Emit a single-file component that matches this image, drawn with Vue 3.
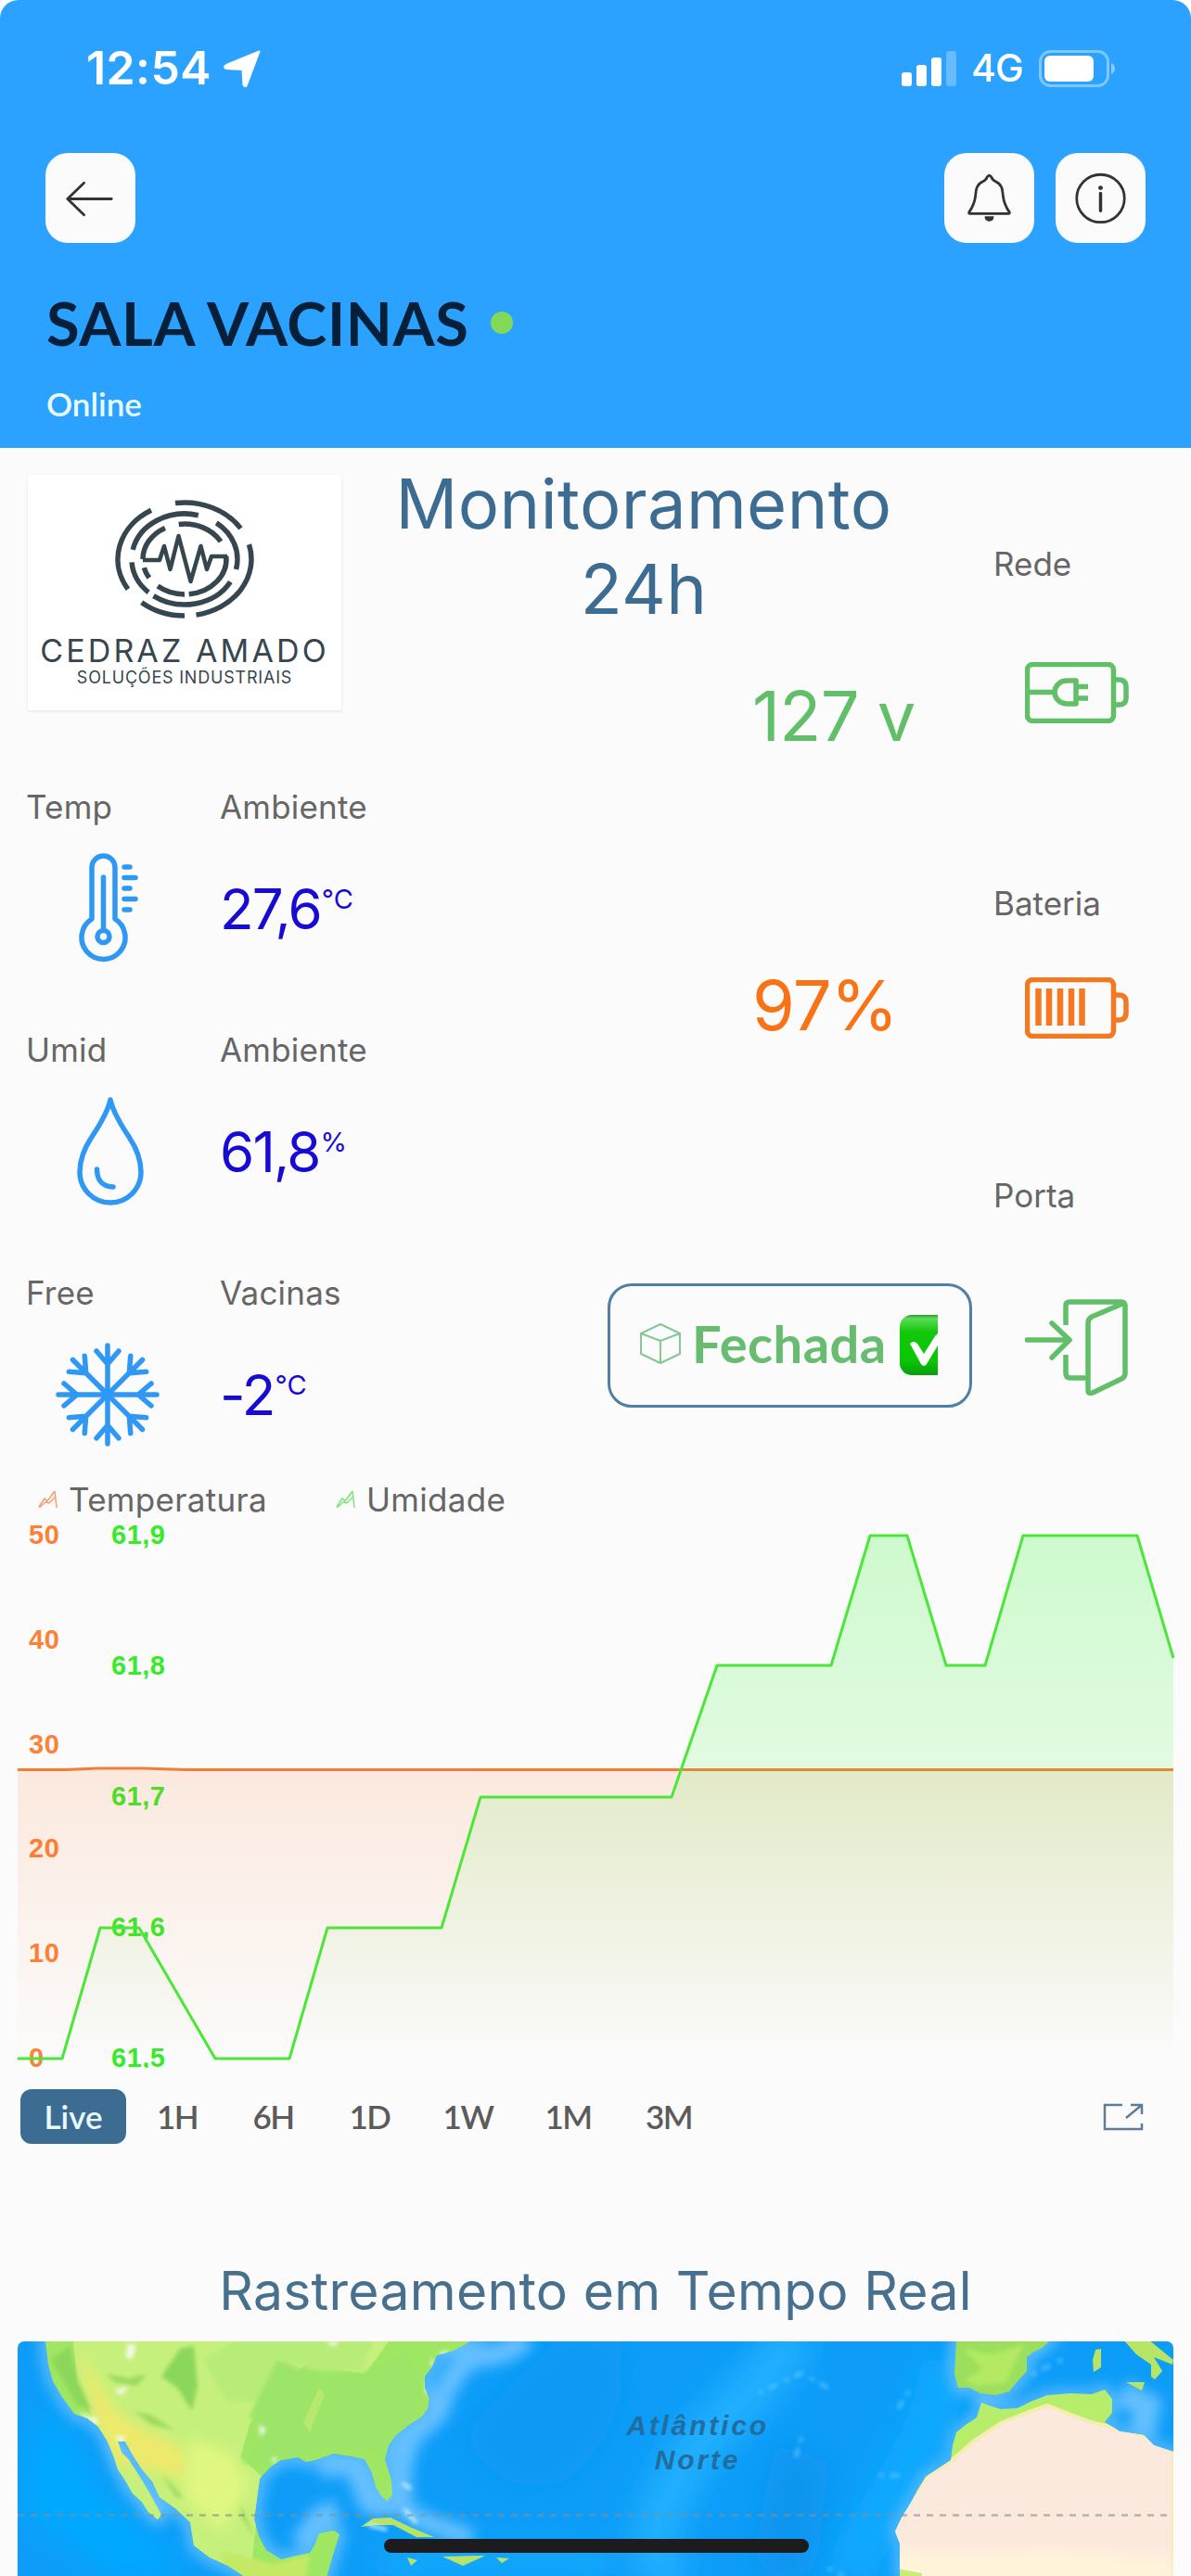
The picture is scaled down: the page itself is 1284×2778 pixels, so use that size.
<template>
  <div class="screen">
    <header class="top">
      <div class="status-bar">
        <span class="clock">12:54</span>
        <svg class="location" viewBox="0 0 40 40"><path d="M38.5 1.5 L25 37.5 Q23.5 41 21.5 37.5 L20.500 21 L3 20 Q-1 18.500 3 16 Z" fill="#fff" stroke="#fff" stroke-width="2" stroke-linejoin="round" /></svg>
        <svg class="signal" viewBox="0 0 60 38">
          <rect x="0" y="23" width="11" height="15" rx="3" />
          <rect x="16" y="15" width="11" height="23" rx="3" />
          <rect x="32" y="7" width="11" height="31" rx="3" />
          <rect x="48" y="0" width="11" height="38" rx="3" opacity=".28" />
        </svg>
        <span class="network">4G</span>
        <svg class="phone-battery" viewBox="0 0 84 40">
          <rect x="1.500" y="1.500" width="73" height="37" rx="11" fill="none" stroke="#fff" stroke-opacity=".4" stroke-width="3" />
          <rect x="6" y="6" width="53" height="28" rx="6" fill="#fff" />
          <path d="M78 14 Q82 16 82 20 Q82 24 78 26 Z" fill="#fff" opacity=".45" />
        </svg>
      </div>

      <div class="toolbar">
        <button type="button">
          <svg viewBox="0 0 98 98"><path d="M72 50 H24 M42 32.500 L24 50 L42 67.500" /></svg>
        </button>
        <button type="button" class="push-right">
          <svg viewBox="0 0 98 98">
            <path d="M27 64.500 C31 59 33 54 34 47 C34.500 39 35.500 34 42 31 C45.500 29.500 46 28 46.500 26.500 Q49 22.500 51.500 26.500 C52 28 52.500 29.500 56 31 C62.500 34 63.500 39 64 47 C65 54 67 59 71 64.500 Q71.500 66 70 66 H28 Q26.500 66 27 64.500 Z" />
            <path d="M44 69 H54 Q54 74.500 49 74.500 Q44 74.500 44 69 Z" fill="#333" stroke="none" />
          </svg>
        </button>
        <button type="button">
          <svg viewBox="0 0 98 98">
            <circle cx="49" cy="49.500" r="26" />
            <path d="M49 44 V63" stroke-width="3.500" />
            <circle cx="49" cy="38" r="2.500" fill="#333" stroke="none" />
          </svg>
        </button>
      </div>

      <div class="device-name">
        <h1>SALA VACINAS</h1>
        <i class="online-dot"></i>
      </div>
      <p class="device-status">Online</p>
    </header>

    <main>
      <section class="dashboard">
        <div class="left-column">
          <div class="brand">
            <svg viewBox="0 0 150 128" fill="none" stroke="#36464f" stroke-width="5.500">
              <path v-for="(arc, index) in logoArcs" :key="index" :d="arc" />
              <path d="M30 65 H48 L53 50 L59.500 75 L68.500 39 L81.500 88 L92.500 50 L99 75 L104 61 H121" stroke-width="4.500" stroke-linejoin="round" />
            </svg>
            <strong>CEDRAZ AMADO</strong>
            <span>SOLUÇÕES INDUSTRIAIS</span>
          </div>

          <article v-for="sensor in sensors" :key="sensor.icon" class="sensor">
            <div class="sensor-labels">
              <span>{{ sensor.label }}</span>
              <span>{{ sensor.place }}</span>
            </div>
            <div class="sensor-body">
              <svg v-if="sensor.icon === 'thermometer'" viewBox="0 0 208 120">
                <path d="M70 71 V15.500 A12.500 12.500 0 0 1 95 15.500 V71 A23.500 23.500 0 1 1 70 71 Z" />
                <path d="M82.500 26 V82" />
                <circle cx="82.500" cy="90" r="6.500" />
                <path d="M105 15 H111 M105 26.500 H117 M105 38 H111 M105 49.500 H117 M105 61 H111" />
              </svg>
              <svg v-else-if="sensor.icon === 'drop'" viewBox="0 0 208 120">
                <path d="M90 4 C93 18 102 32 110 44 C118 56 123 69 123 82 A33 33 0 0 1 57 82 C57 69 62 56 70 44 C78 32 87 18 90 4 Z" />
                <path d="M75.500 79 C75.500 91 82 98 93 98" />
              </svg>
              <svg v-else viewBox="0 0 208 120">
                <g v-for="angle in flakeAngles" :key="angle" :transform="`rotate(${angle} 87 60)`">
                  <path d="M87 60 V7 M75 13 L87 27 L99 13" />
                </g>
              </svg>
              <div class="sensor-value">
                <b>{{ sensor.value }}</b><sup>{{ sensor.unit }}</sup>
              </div>
            </div>
          </article>
        </div>

        <div class="middle-column">
          <h2>Monitoramento 24h</h2>
          <div class="reading mains">127 v</div>
          <div class="reading battery">97%</div>
          <button type="button" class="door-state">
            <svg class="cube" viewBox="0 0 46 46"><path d="M23 2 L44 12 V34 L23 44 L2 34 V12 Z M2 12 L23 20 L44 12 M23 20 V44" /></svg>
            <span>Fechada</span>
            <svg class="check" viewBox="0 0 41 65">
              <defs>
                <linearGradient id="checkFill" x1="0" y1="0" x2="0" y2="1">
                  <stop offset="0" stop-color="#2a9a30" />
                  <stop offset=".06" stop-color="#5ddc58" />
                  <stop offset=".28" stop-color="#12c70b" />
                  <stop offset=".75" stop-color="#0ac704" />
                  <stop offset="1" stop-color="#0a9d13" />
                </linearGradient>
              </defs>
              <rect width="66" height="65" rx="13" fill="url(#checkFill)" />
              <path d="M11 31 Q15 27 19 31 L26 42 L38 23 L41 20 V33 L29 53 Q26 57 23 53 Z" fill="#fff" />
            </svg>
          </button>
        </div>

        <div class="right-column">
          <p class="label-mains">Rede</p>
          <svg class="mains-icon" viewBox="0 0 112 66">
            <rect x="2.500" y="2.500" width="93" height="61" rx="6" />
            <path d="M97 19 H101 Q109 19 109 27 V39 Q109 46 101 46 H97" />
            <path d="M2 32.500 H30" />
            <path d="M55 20 H45 A13 12.500 0 0 0 45 45 H55 Z M56 26.500 H68 M56 39 H68" />
          </svg>
          <p class="label-battery">Bateria</p>
          <svg class="battery-icon" viewBox="0 0 112 66">
            <rect x="2.500" y="2.500" width="93" height="61" rx="6" />
            <path d="M97 19 H101 Q109 19 109 27 V38 Q109 46 101 46 H97" />
            <path d="M14.500 12 V52 M26 12 V52 M38 12 V52 M50 12 V52 M61.500 12 V52" stroke-width="6.500" />
          </svg>
          <p class="label-door">Porta</p>
          <svg class="door-icon" viewBox="0 0 112 106">
            <path d="M44 28 V7 Q44 3 48 3 H104 Q108 3 108 8 V80 Q108 84 104 86 L73 101 Q68 103 68 98 V26 Q68 21 72 19 L105 5" />
            <path d="M44 60 V80 Q44 85 49 85 H67" />
            <path d="M2 44 H47 M29 26 L48 44 L29 63" stroke-linecap="round" stroke-linejoin="round" />
          </svg>
        </div>
      </section>

      <div class="legend">
        <span v-for="item in legend" :key="item.name">
          <svg viewBox="0 0 22 22" :stroke="item.color"><path d="M1 19 L7 10 L10 13 L18 2 M1 20 L8 14 L12 15 L19 8 M18 2 L20 20" /></svg>
          {{ item.name }}
        </span>
      </div>

      <svg class="chart" viewBox="0 1637 1284 593">
        <defs>
          <linearGradient id="tempFill" gradientUnits="userSpaceOnUse" x1="0" y1="1908" x2="0" y2="2220">
            <stop offset="0" stop-color="#ff6d1a" stop-opacity=".13" />
            <stop offset="1" stop-color="#ff6d1a" stop-opacity="0" />
          </linearGradient>
          <linearGradient id="humidFill" gradientUnits="userSpaceOnUse" x1="0" y1="1656" x2="0" y2="2220">
            <stop offset="0" stop-color="#2df52d" stop-opacity=".22" />
            <stop offset="1" stop-color="#2df52d" stop-opacity="0" />
          </linearGradient>
        </defs>
        <g class="axis temp-axis">
          <text v-for="tick in tempTicks" :key="tick.text" x="31" :y="tick.y">{{ tick.text }}</text>
        </g>
        <g class="axis humid-axis">
          <text v-for="tick in humidTicks" :key="tick.text" x="120" :y="tick.y">{{ tick.text }}</text>
        </g>
        <path :d="`${tempLine} V2220 H19 Z`" fill="url(#tempFill)" />
        <path :d="tempLine" class="temp-line" />
        <path :d="`${humidLine} V2220 H19 Z`" fill="url(#humidFill)" />
        <path :d="humidLine" class="humid-line" />
      </svg>

      <nav class="ranges">
        <button
          v-for="range in ranges"
          :key="range.name"
          type="button"
          :class="{ active: range.name === activeRange }"
          :style="{ width: range.width + 'px' }"
          @click="activeRange = range.name"
        >{{ range.name }}</button>
        <svg class="expand" viewBox="0 0 44 30"><path d="M21 2 H2 V28 H42 V22 M25 16 L42 2 M30 2 H42 V12" /></svg>
      </nav>

      <h3>Rastreamento em Tempo Real</h3>

      <div class="map">
        <svg viewBox="0 0 1246 253">
          <defs>
            <filter id="soft" x="-20%" y="-20%" width="140%" height="140%"><feGaussianBlur stdDeviation="7" /></filter>
            <filter id="softer" x="-30%" y="-30%" width="160%" height="160%"><feGaussianBlur stdDeviation="16" /></filter>
            <filter id="edge"><feGaussianBlur stdDeviation="2" /></filter>
            <clipPath id="america"><path :d="america" /></clipPath>
            <clipPath id="africa"><path :d="africa" /></clipPath>
          </defs>
          <rect width="1246" height="253" fill="#0d9df8" />
          <g filter="url(#softer)">
            <path d="M30 60 L90 160 L190 253 H100 L0 180 Z" fill="#05a9ff" />
            <path d="M840 -10 C790 70 740 90 710 150 S680 230 710 260" fill="none" stroke="#22b0ff" stroke-width="48" />
            <path d="M1000 20 C990 120 920 180 900 253" fill="none" stroke="#10aaff" stroke-width="50" />
            <path d="M480 100 C530 190 620 170 650 60 V0 H580 Z" fill="#0899f4" />
            <path d="M850 120 C830 170 840 220 810 250" fill="none" stroke="#0795f0" stroke-width="65" />
            <path d="M400 225 H640 V253 H390 Z" fill="#18aaff" />
          </g>
          <g filter="url(#soft)" fill="none" stroke="#63bfff">
            <path :d="america" stroke-width="12" />
            <path d="M548 -4 Q530 15 490 17 Q462 38 453 76 L422 105 L410 150 Q399 190 378 172 L363 132 L325 135" stroke-width="24" />
            <path d="M415 100 V180 L440 195 L490 213" stroke-width="21" />
            <path d="M305 220 L325 190 L345 182" stroke-width="24" />
            <path :d="africa" stroke-width="10" />
            <path :d="iberia" stroke-width="12" />
            <path d="M1190 55 L1218 70 L1212 100" stroke-width="28" />
          </g>
          <g fill="none" stroke="#65ccff" stroke-width="4" stroke-linecap="round" stroke-dasharray="2 10 7 12" filter="url(#edge)" opacity=".7">
            <path d="M800 55 L845 34 L877 52 M845 105 L838 128 M960 55 L945 80 M930 144 L955 145 M1095 35 L1125 20" />
            <path d="M875 245 L890 253" />
          </g>
          <path :d="america" fill="#9fe662" />
          <g clip-path="url(#america)">
            <path d="M60 0 H400 L375 35 L310 25 L275 55 L250 90 L240 125 L263 145 L250 260 H150 L90 100 L65 50 Z" fill="#c6f07c" />
            <path d="M240 -5 H385 L370 32 H325 L300 25 L270 65 H225 L200 20 Z" fill="#b8ec78" filter="url(#edge)" />
            <path d="M65 10 L85 40 L105 75 L135 95 L175 112 L190 150 L150 140 L105 130 L85 90 Z" fill="#eee96c" filter="url(#soft)" />
            <path d="M185 105 L230 120 L250 155 L220 205 L180 170 Z" fill="#dff780" filter="url(#soft)" />
            <path d="M36 20 L56 5 L64 40 L80 75 L64 68 Z M175 8 L190 5 L194 48 L188 75 L172 50 L155 38 Z" fill="#8bd75c" filter="url(#edge)" />
            <path d="M125 75 L145 80 L170 96 L145 90 Z M95 35 L120 40 L140 35 L128 48 L105 44 Z M155 142 L180 170 L170 167 Z M240 175 L257 215 L242 190 Z" fill="#9bd95d" filter="url(#edge)" />
            <path d="M280 20 L250 80 L270 105 L240 130 L270 135 L330 115 L400 120 L440 60 L420 10 L370 35 L330 40 Z" fill="#9ce568" filter="url(#edge)" />
            <path d="M325 50 L331 57 L315 98 L308 87 Z" fill="#b6e96d" />
            <path d="M220 225 L275 240 L315 230 L310 260 H220 Z" fill="#c3e965" filter="url(#edge)" />
            <g fill="#f3fae9" filter="url(#edge)">
              <path d="M118 3 L128 4 L123 20 L117 17 Z M104 53 L120 48 L112 58 Z M104 102 L116 102 L112 110 Z M260 90 L268 95 L262 103 Z M332 0 H348 L340 5 Z M63 75 L87 84 L85 91 Z M275 124 L280 127 L275 132 Z" />
              <path d="M455 12 L466 10 L458 18 Z M447 16 L449 28 L445 25 Z M440 42 L445 52 L440 58 Z" />
            </g>
          </g>
          <path :d="iberia" fill="#9bdf5d" />
          <path d="M1020 8 L1050 14 L1085 3 L1065 45 L1035 48 L1020 42 L1040 30 Z" fill="#b3e963" filter="url(#edge)" />
          <path :d="africa" fill="#b6ee6b" />
          <g clip-path="url(#africa)">
            <path d="M1005 130 L1030 108 L1060 88 L1080 80 L1110 69 L1128 76 L1160 88 L1180 92 L1215 102 L1246 118 V260 H940 V205 L965 168 L980 145 Z" fill="#fce9de" stroke="#f5edad" stroke-width="4" />
            <path d="M945 225 L1040 230 L1110 225 L1246 235 V260 H940 Z" fill="#fff4d9" filter="url(#soft)" />
            <path d="M948 245 L975 250 V260 H945 Z" fill="#c7ed75" />
          </g>
          <g fill="#b7e465">
            <path d="M1162 9 L1168 8 L1168 28 L1160 33 L1159 20 Z" />
            <path d="M1192 -2 H1219 L1246 20 L1245 25 L1225 17 L1234 32 L1226 41 L1222 38 L1222 25 L1206 14 Z" />
            <path d="M1195 44 L1215 44 L1212 53 Z M370 200 L383 191 L402 190 L425 201 L449 211 L430 211 L405 198 L385 198 Z" />
            <path d="M458 232 L504 231 L480 242 Z M420 233 L431 236 L424 242 Z M516 233 L530 234 L522 239 Z" />
          </g>
          <g fill="none" stroke="#ddf9ff" stroke-width="3" filter="url(#edge)">
            <path d="M378 198 L398 203 M415 153 L424 159 M417 181 L430 196" />
          </g>
          <path d="M0 187.500 H1246" fill="none" stroke="#8b8f91" stroke-opacity=".62" stroke-width="2.500" stroke-dasharray="7 7" />
        </svg>
        <div class="ocean-name">Atlântico<br />Norte</div>
        <div class="home-indicator"></div>
      </div>
    </main>
  </div>
</template>

<script setup>
import { ref } from 'vue'

const sensors = [
  { icon: 'thermometer', label: 'Temp', place: 'Ambiente', value: '27,6', unit: '°C' },
  { icon: 'drop', label: 'Umid', place: 'Ambiente', value: '61,8', unit: '%' },
  { icon: 'snow', label: 'Free', place: 'Vacinas', value: '-2', unit: '°C' },
]

const flakeAngles = [0, 45, 90, 135, 180, 225, 270, 315]

const legend = [
  { name: 'Temperatura', color: '#f4a06f' },
  { name: 'Umidade', color: '#7be578' },
]

const ranges = [
  { name: 'Live', width: 114 },
  { name: '1H', width: 110 },
  { name: '6H', width: 97 },
  { name: '1D', width: 111 },
  { name: '1W', width: 101 },
  { name: '1M', width: 115 },
  { name: '3M', width: 102 },
]
const activeRange = ref('Live')

const tempTicks = [50, 40, 30, 20, 10, 0].map((value, i) => ({ text: String(value), y: 1665 + i * 112.8 }))
const humidTicks = ['61,9', '61,8', '61,7', '61,6', '61,5'].map((text, i) => ({ text, y: 1665 + i * 141 }))

const tempLine = 'M19 1908.5 H70 L105 1907 H155 L200 1908.5 H1265'
const humidPoints = [
  [19, 2220], [67, 2220], [108, 2079], [150, 2079], [232, 2220], [312, 2220], [353, 2079],
  [476, 2079], [518, 1938], [724, 1938], [773, 1796], [896, 1796], [938, 1656], [978, 1656],
  [1020, 1796], [1062, 1796], [1103, 1656], [1226, 1656], [1265, 1788],
]
const humidLine = 'M' + humidPoints.map((point) => point.join(' ')).join(' L')

// start and end angles of the logo arcs, clockwise from the right
const logoArcs = [
  [72, 61, 262, 327], [72, 61, 345, 440], [72, 61, 90, 130], [72, 61, 148, 240],
  [57, 49, 192, 285], [57, 49, 307, 373], [57, 49, 30, 126], [57, 49, 133, 176],
  [45, 38, 180, 242], [45, 38, 262, 330], [45, 38, -5, 84], [45, 38, 90, 130], [45, 38, 148, 166],
].map(([rx, ry, from, to]) => {
  const at = (deg) => {
    const rad = (deg * Math.PI) / 180
    return `${(75 + rx * Math.cos(rad)).toFixed(1)} ${(64 + ry * Math.sin(rad)).toFixed(1)}`
  }
  return `M${at(from)} A${rx} ${ry} 0 0 1 ${at(to)}`
})

const america = 'M30 0 L33 25 L38 43 L48 60 L61 78 L75 83 L87 92 L97 108 L104 125 L108 138 L116 150 L124 164 L134 173 L141 184 L151 192 L155 187 L148 174 L139 158 L131 145 L120 128 L112 120 L108 108 L116 108 L125 124 L134 138 L145 151 L153 168 L170 180 L186 195 L190 220 L207 233 L227 242 L247 255 H333 L340 230 L347 208 L341 204 L325 207 L320 220 L315 228 L300 231 L284 235 L268 225 L260 210 L255 192 L258 170 L261 148 L273 135 L284 128 L302 125 L311 130 L321 128 L341 121 L360 124 L374 127 L382 142 L386 157 L393 168 L399 172 L404 165 L403 150 L396 127 L400 112 L407 102 L423 89 L435 82 L442 73 L444 62 L439 50 L439 38 L447 27 L452 15 L470 10 L488 0 Z'
const iberia = 'M1012 0 L1010 35 L1014 50 L1026 50 L1038 56 L1055 58 L1069 54 L1078 43 L1088 32 L1088 17 L1094 12 L1104 7 L1112 0 Z'
const africa = 'M1039 66 L1034 82 L1022 90 L1012 98 L1008 112 L1006 128 L991 138 L979 146 L970 161 L963 174 L953 190 L946 205 L951 218 L951 253 H1246 V119 L1225 112 L1214 101 L1188 97 L1172 87 L1180 77 L1180 62 L1172 52 L1158 57 L1135 56 L1110 58 L1092 65 L1078 72 L1060 73 L1047 69 Z'
</script>

<style>
body { margin: 0; background: #fff; }
</style>

<style scoped>
.screen { width: 1284px; height: 2778px; overflow: hidden; background: #fbfbfb; color: #666; font-family: Inter, sans-serif; border-radius: 20px 20px 0 0; }
h1, h2, h3, p { margin: 0; font-weight: 400; }
button { padding: 0; border: 0; background: none; font: inherit; cursor: pointer; }
svg { display: block; }

.top { height: 483px; box-sizing: border-box; padding-top: 43px; background: #2ba2ff; }
.status-bar { display: flex; align-items: center; height: 61px; padding-left: 93px; color: white; }
.clock { width: 148px; font-size: 50px; font-weight: 600; letter-spacing: .4px; line-height: 61px; }
.location { width: 40px; height: 40px; }
.signal { width: 60px; height: 38px; margin-left: 691px; fill: white; }
.network { width: 73px; margin-left: 15px; font-size: 41px; line-height: 61px; font-weight: 500; letter-spacing: -1px; }
.phone-battery { width: 84px; height: 40px; }
.toolbar { display: flex; gap: 23px; margin-top: 61px; padding: 0 49px; }
.toolbar button { width: 97px; height: 97px; border-radius: 24px; background: #fbfbfb; }
.toolbar svg { width: 97px; height: 97px; fill: none; stroke: #333; stroke-width: 2.8; stroke-linejoin: round; stroke-linecap: round; }
.push-right { margin-left: auto; }
.device-name { display: flex; align-items: center; height: 80px; margin-top: 46px; padding-left: 50px; }
.device-name h1 { width: 479px; color: #07203a; font-family: Lato, sans-serif; font-size: 65px; font-weight: 700; letter-spacing: .6px; line-height: 80px; white-space: nowrap; }
.online-dot { width: 24px; height: 24px; border-radius: 50%; background: #83d957; }
.device-status { margin-top: 27px; padding-left: 50px; color: #e8fbff; font-family: Lato, sans-serif; font-size: 35px; font-weight: 600; line-height: 40px; }

.dashboard { display: flex; height: 1114px; }
.left-column { width: 410px; padding-top: 29px; }
.brand { display: flex; flex-direction: column; align-items: center; width: 338px; height: 254px; margin: 0 0 84px 30px; background: white; box-shadow: 0 1px 3px rgba(0,0,0,.1); color: #36464f; }
.brand svg { width: 150px; height: 128px; margin-top: 27px; }
.brand strong { margin-top: 15px; font-size: 34px; font-weight: 400; letter-spacing: 3.1px; line-height: 40px; white-space: nowrap; }
.brand span { margin-top: -1px; font-size: 18px; letter-spacing: .8px; line-height: 20px; white-space: nowrap; }
.sensor { height: 262px; padding-left: 28px; }
.sensor-labels { display: flex; height: 40px; font-size: 35px; letter-spacing: .2px; line-height: 40px; }
.sensor-labels span:first-child { width: 209px; }
.sensor-body { display: flex; align-items: center; height: 120px; margin-top: 30px; }
.sensor-body svg { width: 208px; height: 120px; margin-left: 1px; fill: none; stroke: #2e98f4; stroke-width: 5.5; stroke-linecap: round; stroke-linejoin: round; }
.sensor-value { display: flex; color: #170ad5; white-space: nowrap; }
.sensor-value b { font-size: 60px; font-weight: 400; line-height: 44px; letter-spacing: -1.8px; }
.sensor-value sup { margin-left: 1px; font-size: 29px; font-weight: 400; line-height: 24px; vertical-align: top; }

.middle-column { width: 645px; }
.middle-column h2 { width: 568px; margin-top: 14px; color: #3d6c92; font-size: 74px; letter-spacing: .4px; line-height: 92px; text-align: center; }
.reading { padding-left: 401px; font-size: 74px; letter-spacing: -.8px; line-height: 60px; white-space: nowrap; }
.mains { margin-top: 61px; color: #60bf68; }
.battery { margin-top: 252px; color: #f97316; }
.door-state { display: flex; align-items: center; width: 393px; height: 134px; box-sizing: border-box; margin: 270px 0 0 245px; padding-left: 31px; border: 3px solid #507fa6; border-radius: 26px; color: #67bc70; }
.cube { width: 46px; height: 46px; margin-top: -4px; fill: none; stroke: #85c895; stroke-width: 2; stroke-linejoin: round; }
.door-state span { width: 224px; margin: -4px 0 0 11px; font-family: Lato, sans-serif; font-size: 56px; font-weight: 700; letter-spacing: .5px; line-height: 60px; text-align: left; }
.check { width: 41px; height: 65px; margin-top: -2px; }

.right-column { padding-left: 16px; }
.right-column p { font-size: 35px; line-height: 40px; }
.right-column svg { width: 112px; margin-left: 34px; fill: none; stroke: #60bf68; stroke-width: 5.5; stroke-linejoin: round; }
.right-column .label-mains { margin-top: 105px; }
.right-column .mains-icon { height: 66px; margin-top: 86px; }
.right-column .label-battery { margin-top: 174px; }
.right-column .battery-icon { height: 66px; margin-top: 60px; stroke: #f27922; }
.right-column .label-door { margin-top: 149px; }
.right-column .door-icon { height: 106px; margin-top: 92px; }

.legend { display: flex; height: 40px; padding-left: 41px; font-size: 35px; letter-spacing: .3px; line-height: 40px; }
.legend span { display: flex; align-items: center; gap: 11px; width: 321px; }
.legend svg { width: 22px; height: 22px; fill: none; stroke-width: 1.5; }
.chart { width: 1284px; height: 593px; }
.axis { font-family: "Liberation Sans", sans-serif; font-size: 29px; font-weight: 700; letter-spacing: .5px; }
.temp-axis { fill: #fa8137; }
.humid-axis { fill: #37eb29; }
.temp-line, .humid-line { fill: none; stroke-width: 3; stroke-linejoin: round; }
.temp-line { stroke: #f47c35; }
.humid-line { stroke: #4be638; }
.ranges { display: flex; align-items: center; height: 59px; margin-top: 23px; padding-left: 22px; font-family: Lato, sans-serif; font-size: 35px; font-weight: 600; }
.ranges button { height: 59px; padding-bottom: 2px; color: #5b5b5b; letter-spacing: -1.5px; }
.ranges .active { border-radius: 12px; background: #3d6c92; color: #e8faff; letter-spacing: 0; }
.expand { width: 44px; height: 30px; margin-left: auto; margin-right: 51px; fill: none; stroke: #607d98; stroke-width: 2.5; }
h3 { margin-top: 129px; color: #47708f; font-size: 57px; letter-spacing: .3px; line-height: 60px; text-align: center; }

.map { position: relative; height: 253px; margin: 24px 19px 0; border-radius: 7px 7px 0 0; overflow: hidden; }
.map svg { width: 1246px; height: 253px; }
.ocean-name { position: absolute; left: 640px; top: 72px; width: 186px; color: #236d9e; font-family: "Liberation Sans", sans-serif; font-size: 30px; font-style: italic; font-weight: 700; letter-spacing: 2.8px; line-height: 37px; text-align: center; }
.home-indicator { position: absolute; left: 395px; top: 213px; width: 458px; height: 15px; border-radius: 8px; background: #1c1c1e; }
</style>
